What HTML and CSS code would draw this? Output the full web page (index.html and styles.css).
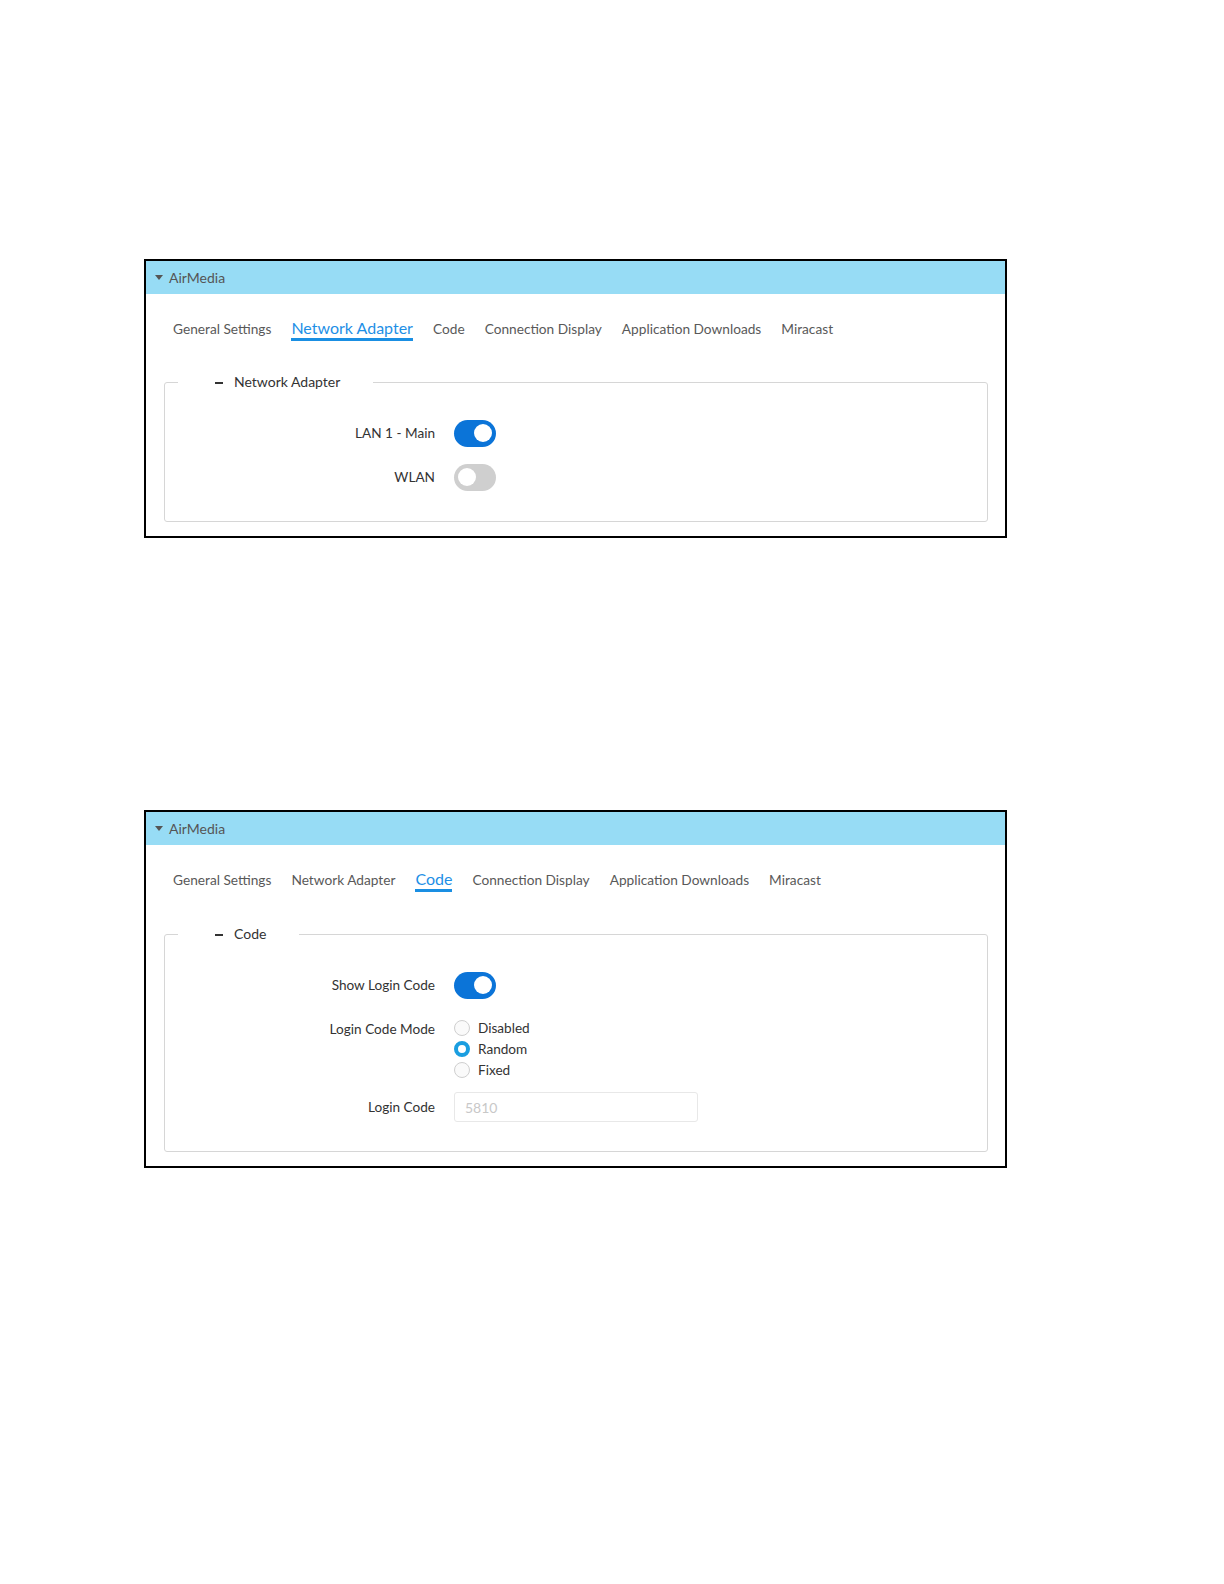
FILE: index.html
```html
<!DOCTYPE html>
<html lang="en">

<head>
    <meta charset="UTF-8">
    <meta name="viewport" content="width=device-width, initial-scale=1.0">
    <title>AirMedia</title>
    <link rel="stylesheet" href="styles.css">
</head>

<body>
    <div class="page">
        <div class="panel">
            <div class="panel-head"><span class="caret"></span>AirMedia</div>
            <div class="panel-body">
                <div class="tabs">
                    <span class="tab">General Settings</span>
                    <span class="tab active">Network Adapter</span>
                    <span class="tab">Code</span>
                    <span class="tab">Connection Display</span>
                    <span class="tab">Application Downloads</span>
                    <span class="tab">Miracast</span>
                </div>
                <fieldset class="group">
                    <legend><span class="dash"></span>Network Adapter</legend>
                    <div class="row">
                        <span class="lbl">LAN 1 - Main</span>
                        <span class="switch on"><span class="knob"></span></span>
                    </div>
                    <div class="row">
                        <span class="lbl">WLAN</span>
                        <span class="switch"><span class="knob"></span></span>
                    </div>
                </fieldset>
            </div>
        </div>

        <div class="panel second">
            <div class="panel-head"><span class="caret"></span>AirMedia</div>
            <div class="panel-body">
                <div class="tabs">
                    <span class="tab">General Settings</span>
                    <span class="tab">Network Adapter</span>
                    <span class="tab active">Code</span>
                    <span class="tab">Connection Display</span>
                    <span class="tab">Application Downloads</span>
                    <span class="tab">Miracast</span>
                </div>
                <fieldset class="group code-group">
                    <legend><span class="dash"></span>Code</legend>
                    <div class="row">
                        <span class="lbl">Show Login Code</span>
                        <span class="switch on"><span class="knob"></span></span>
                    </div>
                    <div class="row radios-row">
                        <span class="lbl">Login Code Mode</span>
                        <div class="radios">
                            <div class="radio"><span class="dot"></span>Disabled</div>
                            <div class="radio"><span class="dot checked"></span>Random</div>
                            <div class="radio"><span class="dot"></span>Fixed</div>
                        </div>
                    </div>
                    <div class="row">
                        <span class="lbl">Login Code</span>
                        <input class="code-input" type="text" placeholder="5810" disabled>
                    </div>
                </fieldset>
            </div>
        </div>
    </div>
</body>

</html>
```

FILE: styles.css
```css
body {
    margin: 0;
    background: #fff;
    font-family: Lato, "Liberation Sans", sans-serif;
    font-size: 14px;
    color: #333;
}

.page {
    padding: 259px 0 0 144px;
}

.panel {
    width: 859px;
    border: 2px solid #000;
}

.second {
    margin-top: 272px;
}

.panel-head {
    display: flex;
    align-items: center;
    height: 33px;
    padding-left: 9px;
    background-color: #97dcf5;
    color: #555;
    font-size: 14px;
}

.caret {
    width: 0;
    height: 0;
    border-left: 4px solid transparent;
    border-right: 4px solid transparent;
    border-top: 5px solid #555;
    margin-right: 6px;
}

.panel-body {
    padding: 0 17px 14px 18px;
}

.tabs {
    display: flex;
    align-items: baseline;
    gap: 20px;
    padding: 24px 0 0 9px;
    line-height: 20px;
}

.tab {
    color: #595959;
    font-size: 13.7px;
}

.tab.active {
    color: #1e8fe6;
    font-size: 16px;
    line-height: 20px;
    border-bottom: 3px solid #1a8fe3;
}

.group {
    margin: 32px 0 0 0;
    padding: 20px 0 22px 0;
    border: 1px solid #d6d6d6;
    border-radius: 3px;
    min-width: 0;
}

.code-group {
    margin-top: 33px;
}

.group legend {
    margin-left: 13px;
    padding: 0 33px 0 37px;
    line-height: 18px;
    color: #333;
    font-size: 14px;
}

.dash {
    display: inline-block;
    width: 8px;
    height: 2px;
    background: #333;
    vertical-align: middle;
    margin-right: 11px;
}

.row {
    display: grid;
    grid-template-columns: 270px auto;
    column-gap: 19px;
    align-items: center;
    height: 44px;
}

.lbl {
    text-align: right;
    color: #333;
    font-size: 13.6px;
}

.switch {
    display: flex;
    align-items: center;
    width: 42px;
    height: 27px;
    border-radius: 14px;
    background: #cfcfcf;
    padding: 0 4px;
    box-sizing: border-box;
}

.switch.on {
    background: #0b74d8;
    justify-content: flex-end;
}

.knob {
    width: 18px;
    height: 18px;
    border-radius: 50%;
    background: #fff;
}

.radios-row {
    height: auto;
    align-items: start;
    padding: 10px 0 5px;
}

.radios-row .lbl {
    line-height: 21px;
    padding-top: 2px;
}

.radio {
    display: flex;
    align-items: center;
    height: 21px;
    color: #333;
    font-size: 13.6px;
}

.dot {
    width: 14px;
    height: 14px;
    border: 1px solid #cfcfcf;
    border-radius: 50%;
    background: #fafafa;
    margin-right: 8px;
}

.dot.checked {
    width: 8px;
    height: 8px;
    border: 4px solid #1a9ee0;
    background: #fff;
}

.code-input {
    width: 244px;
    height: 30px;
    box-sizing: border-box;
    border: 1px solid #e8e8e8;
    border-radius: 3px;
    background: #fff;
    padding: 0 10px;
    font-family: Lato, "Liberation Sans", sans-serif;
    font-size: 14px;
}

.code-input::placeholder {
    color: #c8c8c8;
}
```
